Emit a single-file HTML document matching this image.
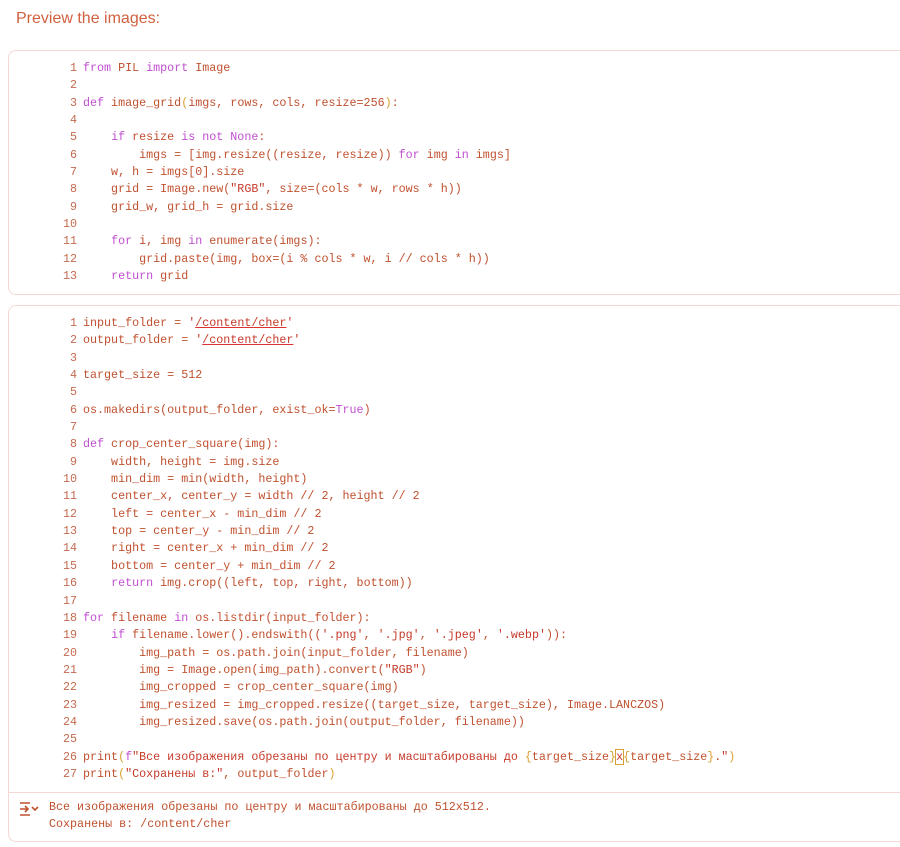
<!DOCTYPE html>
<html><head><meta charset="utf-8"><style>
body{margin:0;background:#fff;width:900px;height:847px;overflow:hidden;font-family:"Liberation Sans",sans-serif}
.t{position:absolute;left:16px;top:10px;font-size:16px;color:#d0603e}
.cell{position:absolute;left:8px;width:900px;border:1px solid #f4d8d5;border-right:none;border-radius:8px 0 0 8px;background:#fff}
pre{margin:0;font-family:"Liberation Mono","DejaVu Sans Mono",monospace;font-size:11.7px;line-height:17.35px;color:#c0512f;white-space:pre}
.code{position:absolute;left:44px}
.ln{display:inline-block;width:24px;text-align:right;color:#c46a4f;margin-right:6px}
.k{color:#c04fd0}
.s{color:#c53a2a}
.u{text-decoration:underline;text-decoration-color:#d33}
.b{color:#d8a030}
.out{position:absolute;left:0;right:0;top:486px;border-top:1px solid #f4d8d5}
</style></head><body>
<div class="t">Preview the images:</div>
<div class="cell" style="top:50px;height:243px">
<pre class="code" style="top:9px"><span class="ln">1</span><span class="k">from</span> PIL <span class="k">import</span> Image
<span class="ln">2</span>
<span class="ln">3</span><span class="k">def</span> image_grid<span class="b">(</span>imgs, rows, cols, resize=256<span class="b">)</span>:
<span class="ln">4</span>
<span class="ln">5</span>    <span class="k">if</span> resize <span class="k">is not None</span>:
<span class="ln">6</span>        imgs = [img.resize((resize, resize)) <span class="k">for</span> img <span class="k">in</span> imgs]
<span class="ln">7</span>    w, h = imgs[0].size
<span class="ln">8</span>    grid = Image.new(<span class="s">"RGB"</span>, size=(cols * w, rows * h))
<span class="ln">9</span>    grid_w, grid_h = grid.size
<span class="ln">10</span>
<span class="ln">11</span>    <span class="k">for</span> i, img <span class="k">in</span> enumerate(imgs):
<span class="ln">12</span>        grid.paste(img, box=(i % cols * w, i // cols * h))
<span class="ln">13</span>    <span class="k">return</span> grid</pre>
</div>
<div class="cell" style="top:305px;height:535px">
<pre class="code" style="top:9px"><span class="ln">1</span>input_folder = <span class="s">'<span class="u">/content/cher</span>'</span>
<span class="ln">2</span>output_folder = <span class="s">'<span class="u">/content/cher</span>'</span>
<span class="ln">3</span>
<span class="ln">4</span>target_size = 512
<span class="ln">5</span>
<span class="ln">6</span>os.makedirs(output_folder, exist_ok=<span class="k">True</span>)
<span class="ln">7</span>
<span class="ln">8</span><span class="k">def</span> crop_center_square(img):
<span class="ln">9</span>    width, height = img.size
<span class="ln">10</span>    min_dim = min(width, height)
<span class="ln">11</span>    center_x, center_y = width // 2, height // 2
<span class="ln">12</span>    left = center_x - min_dim // 2
<span class="ln">13</span>    top = center_y - min_dim // 2
<span class="ln">14</span>    right = center_x + min_dim // 2
<span class="ln">15</span>    bottom = center_y + min_dim // 2
<span class="ln">16</span>    <span class="k">return</span> img.crop((left, top, right, bottom))
<span class="ln">17</span>
<span class="ln">18</span><span class="k">for</span> filename <span class="k">in</span> os.listdir(input_folder):
<span class="ln">19</span>    <span class="k">if</span> filename.lower().endswith((<span class="s">'.png'</span>, <span class="s">'.jpg'</span>, <span class="s">'.jpeg'</span>, <span class="s">'.webp'</span>)):
<span class="ln">20</span>        img_path = os.path.join(input_folder, filename)
<span class="ln">21</span>        img = Image.open(img_path).convert(<span class="s">"RGB"</span>)
<span class="ln">22</span>        img_cropped = crop_center_square(img)
<span class="ln">23</span>        img_resized = img_cropped.resize((target_size, target_size), Image.LANCZOS)
<span class="ln">24</span>        img_resized.save(os.path.join(output_folder, filename))
<span class="ln">25</span>
<span class="ln">26</span>print<span class="b">(</span><span class="k">f</span><span class="s">"Все изображения обрезаны по центру и масштабированы до </span><span class="b">{</span>target_size<span class="b">}</span><span class="s" style="outline:1px solid #d8a030">x</span><span class="b">{</span>target_size<span class="b">}</span><span class="s">."</span><span class="b">)</span>
<span class="ln">27</span>print<span class="b">(</span><span class="s">"Сохранены в:"</span>, output_folder<span class="b">)</span></pre>
<div class="out">
<svg style="position:absolute;left:10px;top:8px" width="20" height="16" viewBox="0 0 20 16"><path d="M1 2h10M1 14h10M1 8h8M6 5l3 3-3 3M13 6l3 3 3-3" stroke="#c0512f" stroke-width="1.6" fill="none"/></svg>
<pre style="position:absolute;left:40px;top:6px">Все изображения обрезаны по центру и масштабированы до 512x512.
Сохранены в: /content/cher</pre>
</div>
</div>
</body></html>
